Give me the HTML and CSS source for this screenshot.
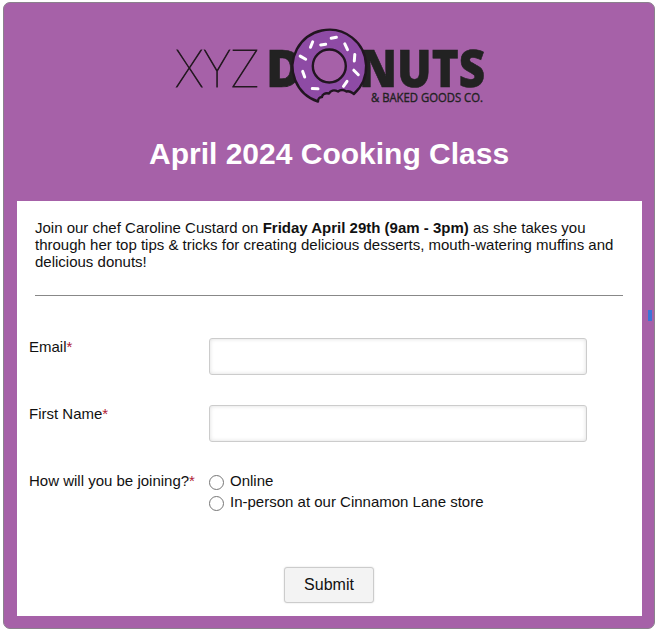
FILE: index.html
```html
<!DOCTYPE html>
<html lang="en">
<head>
<meta charset="utf-8">
<title>April 2024 Cooking Class</title>
<link rel="stylesheet" href="styles.css">
</head>
<body>
<main class="card">
  <header class="header">
    <svg class="logo" viewBox="170 24 320 84" role="img" aria-label="XYZ Donuts &amp; Baked Goods Co.">
      <text class="thin" x="175" y="87" textLength="84" lengthAdjust="spacingAndGlyphs">XYZ</text>
      <text class="heavy" x="266" y="87" textLength="37" lengthAdjust="spacingAndGlyphs">D</text>
      <text class="heavy" x="359" y="87" textLength="126" lengthAdjust="spacingAndGlyphs">NUTS</text>
      <text class="tagline" x="371" y="101.500" textLength="112" lengthAdjust="spacingAndGlyphs">&amp; BAKED GOODS CO.</text>
      <path class="donut" fill-rule="evenodd" d="M318 101.500A36.800 36.800 0 1 1 353.800 94C351 92 350 90.500 346.500 91.500C343.500 89.500 340.500 89.500 338 91.500C334 89.500 330.500 90.500 329 93.500C325 92.500 322 94.500 322 97C319.500 97 318 99 318 101.500ZM345.800 66A16.500 16.500 0 1 0 312.800 66A16.500 16.500 0 1 0 345.800 66Z"/>
      <path class="sprinkles" d="M310.500 47.300l2.200-5.500M320.700 44.900l5-.6M331.200 38.300l5.200-1M344.800 43.800l2.700 5.800M354.800 54.500l-.5 6.500M353.800 70.200l4.500 4.500M347 81.300l-3.500 5M312.300 88.500l5.700.3M302.700 71.400l2 5.600M300.200 56.100l5.500 3.200"/>
    </svg>
    <h1 class="title">April 2024 Cooking Class</h1>
  </header>
  <form class="panel">
    <p class="intro">Join our chef Caroline Custard on <b>Friday April 29th (9am - 3pm)</b> as she takes you<br>through her top tips &amp; tricks for creating delicious desserts, mouth-watering muffins and<br>delicious donuts!</p>
    <hr class="divider">
    <div class="row">
      <label class="label" for="email">Email<span class="required">*</span></label>
      <input class="field" id="email" type="text">
    </div>
    <div class="row">
      <label class="label" for="name">First Name<span class="required">*</span></label>
      <input class="field" id="name" type="text">
    </div>
    <div class="row">
      <span class="label">How will you be joining?<span class="required">*</span></span>
      <div class="options">
        <label class="option"><input class="radio" type="radio" name="joining">Online</label>
        <label class="option"><input class="radio" type="radio" name="joining">In-person at our Cinnamon Lane store</label>
      </div>
    </div>
    <button class="submit" type="button">Submit</button>
  </form>
  <span class="marker"></span>
</main>
</body>
</html>
```
FILE: styles.css
```css
* {
  box-sizing: border-box;
}

body {
  margin: 0;
  padding: 2px 3px 4px;
  background: #fff;
  color: #111;
  font: 15px/17px "Liberation Sans", Arial, sans-serif;
}

.card {
  position: relative;
  height: 627px;
  padding: 0 12px 12px 13px;
  border: 1px solid #8b818d;
  border-radius: 7px;
  background: #a661a8;
}

.header {
  display: flex;
  flex-direction: column;
  height: 198px;
  padding-top: 21px;
}

.logo {
  width: 320px;
  height: 84px;
  margin-left: 153px;
  overflow: visible;
}

.thin {
  fill: #231820;
  stroke: #231820;
  stroke-width: 1;
  font: 200 52px Lato, sans-serif;
}

.heavy {
  fill: #222;
  stroke: #222;
  stroke-width: 0.6;
  font: 800 52px "Open Sans", sans-serif;
}

.tagline {
  fill: #222;
  stroke: #222;
  stroke-width: 0.4;
  font: 500 13.5px "Open Sans", sans-serif;
}

.donut {
  fill: #8e4ba5;
  stroke: #211520;
  stroke-width: 2.4;
  stroke-linejoin: round;
}

.sprinkles {
  fill: none;
  stroke: #fff;
  stroke-width: 3;
  stroke-linecap: round;
}

.title {
  margin: 28px 0 0;
  padding-left: 132px;
  color: #fff;
  font-size: 30px;
  line-height: 36px;
  white-space: nowrap;
}

.panel {
  height: 415px;
  padding: 18px 12px 0;
  background: #fff;
}

.intro {
  margin: 0 0 25px 6px;
  white-space: nowrap;
}

.divider {
  height: 1px;
  margin: 0 7px 42px 6px;
  border: 0;
  background: #888;
}

.row {
  display: flex;
  height: 67px;
}

.label {
  width: 180px;
  white-space: nowrap;
}

.required {
  color: #b02035;
}

.field {
  width: 378px;
  height: 37px;
  margin: 0;
  border: 1px solid #ccc;
  border-radius: 3px;
  box-shadow: inset 0 0 4px #ddd;
}

.options {
  display: flex;
  flex-direction: column;
  gap: 3px;
}

.option {
  display: flex;
  gap: 6px;
  white-space: nowrap;
}

.radio {
  appearance: none;
  width: 15px;
  height: 15px;
  margin: 3px 0 0;
  border: 1px solid #767676;
  border-radius: 50%;
  background: #fff;
}

.submit {
  display: block;
  width: 90px;
  height: 36px;
  margin: 28px 0 0 255px;
  padding: 0;
  border: 1px solid #ccc;
  border-radius: 3px;
  background: #f3f3f3;
  box-shadow: 0 0 2px #ddd;
  color: #111;
  font: 16px "Liberation Sans", Arial, sans-serif;
}

.marker {
  position: absolute;
  top: 307px;
  right: 2px;
  width: 4px;
  height: 11px;
  background: #3b74d8;
}
```
